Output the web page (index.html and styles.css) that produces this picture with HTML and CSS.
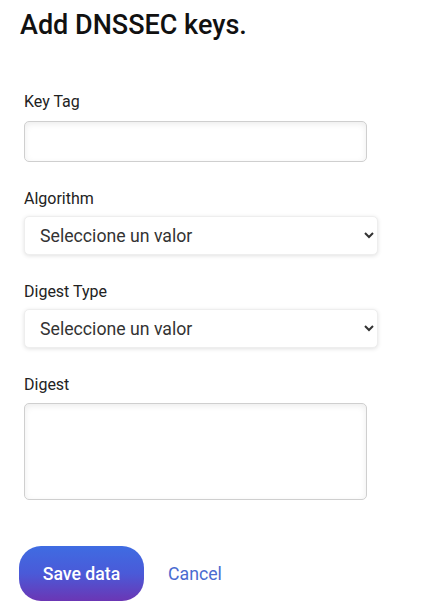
FILE: index.html
```html
<!DOCTYPE html>
<html lang="en">
<head>
<meta charset="utf-8">
<title>Add DNSSEC keys</title>
<link rel="stylesheet" href="styles.css">
</head>
<body>
<main class="page">
  <h1 class="title">Add DNSSEC keys.</h1>
  <form class="form">
    <div class="field">
      <label class="label" for="keytag">Key Tag</label>
      <input class="input" id="keytag" type="text">
    </div>
    <div class="field">
      <label class="label" for="alg">Algorithm</label>
      <select class="select" id="alg"><option>Seleccione un valor</option></select>
    </div>
    <div class="field">
      <label class="label" for="dtype">Digest Type</label>
      <select class="select" id="dtype"><option>Seleccione un valor</option></select>
    </div>
    <div class="field">
      <label class="label" for="digest">Digest</label>
      <textarea class="textarea" id="digest"></textarea>
    </div>
    <div class="actions">
      <button type="button" class="btn-save">Save data</button>
      <a class="cancel" href="#">Cancel</a>
    </div>
  </form>
</main>
</body>
</html>
```

FILE: styles.css
```css
* { box-sizing: border-box; }
html, body { margin: 0; padding: 0; background: #ffffff; }
body { font-family: Roboto, "Noto Sans", "Liberation Sans", sans-serif; color: #222; }
.page { padding: 9px 0 0 20px; }
.title {
  margin: 0;
  font-size: 27px;
  line-height: 32px;
  font-weight: 500;
  color: #111;
}
.form {
  margin-top: 51px;
  padding-left: 4px;
  display: flex;
  flex-direction: column;
  gap: 27px;
}
.field { display: flex; flex-direction: column; gap: 9px; align-items: flex-start; }
.label { font-size: 16px; line-height: 20px; color: #222; }
.input {
  width: 343px;
  height: 41px;
  border: 1px solid #cfcfcf;
  border-radius: 5px;
  box-shadow: inset 0 2px 6px rgba(0,0,0,0.08);
  background: #fff;
  font: inherit;
}
.select {
  width: 354px;
  height: 39px;
  border: 1px solid #eeeeee;
  border-radius: 5px;
  box-shadow: 0 1px 4px rgba(0,0,0,0.12);
  background: #fff;
  font-family: Roboto, "Noto Sans", sans-serif;
  font-size: 17.7px;
  color: #333;
  padding-left: 11px;
  margin-top: -2px;
}
.textarea {
  width: 343px;
  height: 97px;
  border: 1px solid #cfcfcf;
  border-radius: 5px;
  box-shadow: inset 0 2px 6px rgba(0,0,0,0.08);
  resize: none;
  font: inherit;
  margin-top: -1px;
}
.actions {
  margin-top: 19px;
  margin-left: -5px;
  display: flex;
  align-items: center;
  gap: 24px;
}
.btn-save {
  width: 125px;
  height: 55px;
  border: none;
  border-radius: 22px;
  background: linear-gradient(180deg, #3f6ce2 0%, #4a5ad8 50%, #6b36b4 100%);
  color: #fff;
  font-family: Roboto, "Noto Sans", sans-serif;
  font-size: 17.7px;
  font-weight: 500;
}
.cancel {
  color: #4a6bd0;
  font-size: 17.7px;
  text-decoration: none;
}
```
